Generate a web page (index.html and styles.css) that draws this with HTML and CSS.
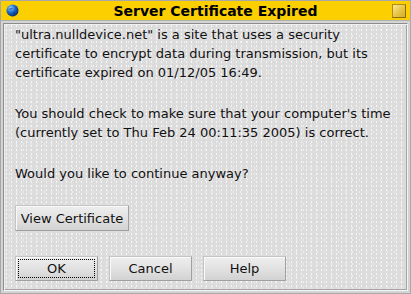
FILE: index.html
```html
<!DOCTYPE html>
<html lang="en">
<head>
    <meta charset="UTF-8">
    <title>Server Certificate Expired</title>
    <link rel="stylesheet" href="styles.css">
</head>
<body>
    <div class="window">
        <div class="titlebar">
            <svg class="globe" width="13" height="13" viewBox="0 0 13 13">
                <defs>
                    <radialGradient id="g" cx="35%" cy="30%" r="75%">
                        <stop offset="0" stop-color="#9fd4ff"/>
                        <stop offset="0.45" stop-color="#1f6fd0"/>
                        <stop offset="1" stop-color="#0a2a66"/>
                    </radialGradient>
                </defs>
                <circle cx="6.5" cy="6.5" r="6" fill="url(#g)"/>
                <path d="M3 5 Q5 3 7 4 Q6 6 4 6 Z M7 8 Q9 7 10 9 Q8 11 7 10 Z" fill="#0b3f8a" opacity="0.6"/>
            </svg>
            <div class="title">Server Certificate Expired</div>
            <div class="close"></div>
        </div>
        <div class="frame">
            <div class="panel">
                <p>"ultra.nulldevice.net" is a site that uses a security certificate to encrypt data during transmission, but its certificate expired on 01/12/05 16:49.</p>
                <p>You should check to make sure that your computer's time (currently set to Thu Feb 24 00:11:35 2005) is correct.</p>
                <p>Would you like to continue anyway?</p>
                <div class="view-row">
                    <button class="btn view">View Certificate</button>
                </div>
                <div class="actions">
                    <button class="btn focus"><span>OK</span></button>
                    <button class="btn">Cancel</button>
                    <button class="btn">Help</button>
                </div>
            </div>
        </div>
    </div>
</body>
</html>
```

FILE: styles.css
```css
* {
    margin: 0;
    padding: 0;
    box-sizing: border-box;
}
body {
    width: 411px;
    height: 294px;
    overflow: hidden;
    font-family: "DejaVu Sans", sans-serif;
    background: #c8c8c8;
}
.window {
    width: 411px;
    height: 294px;
    display: flex;
    flex-direction: column;
    border: 1px solid #a8a8a8;
    background: #d8d8d8;
}
.titlebar {
    height: 19px;
    flex: none;
    display: flex;
    align-items: center;
    background: #fbcf00;
    padding: 0 4px 0 5px;
}
.globe {
    flex: none;
}
.title {
    flex: 1;
    text-align: center;
    font-weight: bold;
    font-size: 14px;
    color: #000;
    padding-left: 20px;
}
.close {
    width: 14px;
    height: 14px;
    flex: none;
    border: 1px solid #b08f10;
    border-right-color: #8a6f00;
    border-bottom-color: #8a6f00;
    background: linear-gradient(135deg, #fbe89a, #e6c447 55%, #d4ae2a);
}
.frame {
    flex: 1;
    padding: 2px;
    border-top: 1px solid #b0b0b0;
    background: #d4d4d4;
}
.panel {
    height: 100%;
    border: 1px solid #8c8c8c;
    border-right-color: #f4f4f4;
    border-bottom-color: #f4f4f4;
    box-shadow: inset 1px 1px 0 #f0f0f0, inset -1px -1px 0 #a4a4a4;
    padding: 1px 10px 0 11px;
    background-color: #dddcdd;
    background-image:
        radial-gradient(circle, rgba(255,255,255,0.7) 0.6px, transparent 0.9px),
        radial-gradient(circle, rgba(255,255,255,0.5) 0.6px, transparent 0.9px);
    background-size: 5px 4px, 7px 6px;
    background-position: 0 0, 2px 3px;
    color: #111;
}
p {
    font-size: 13px;
    line-height: 19px;
    margin-bottom: 22px;
}
.view-row {
    display: flex;
    margin-top: 1px;
}
.btn {
    font-family: "DejaVu Sans", sans-serif;
    font-size: 13px;
    color: #111;
    height: 26px;
    white-space: nowrap;
    border: 1px solid #a0a0a0;
    border-top-color: #c4c4c4;
    border-left-color: #c4c4c4;
    border-radius: 1px;
    background: linear-gradient(#eeeeee, #e2e2e2 50%, #d2d2d2);
    box-shadow: inset 1px 1px 0 #fafafa;
    padding: 0 4px;
}
.view {
    width: 114px;
}
.actions {
    display: flex;
    gap: 11px;
    margin-top: 25px;
}
.actions .btn {
    width: 83px;
    height: 25px;
}
.focus {
    padding: 2px;
}
.focus span {
    display: flex;
    align-items: center;
    justify-content: center;
    height: 100%;
    border: 1px dotted #000;
}
```
